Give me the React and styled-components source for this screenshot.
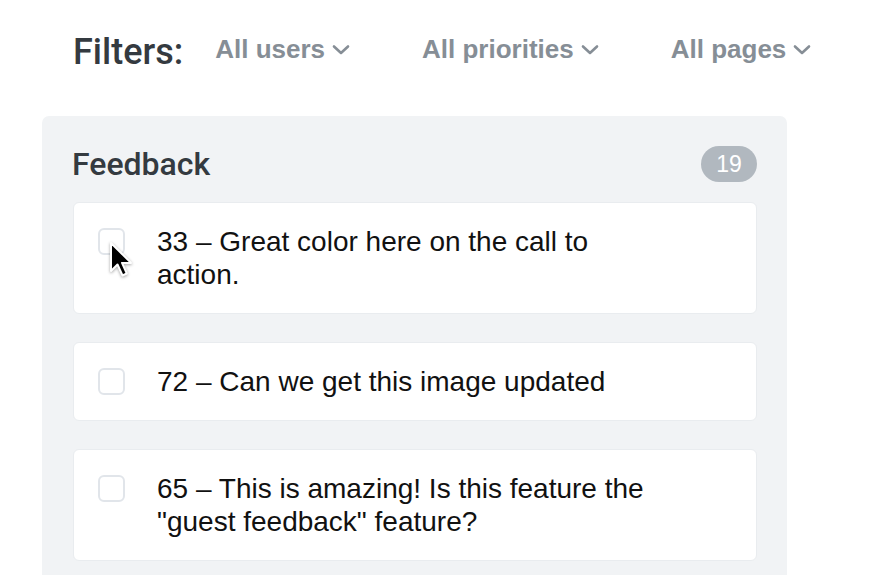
import React from 'react';
import styled, { createGlobalStyle } from 'styled-components';

const GlobalStyle = createGlobalStyle`
  html, body {
    margin: 0;
    padding: 0;
    background: #fff;
  }
  body {
    font-family: 'Liberation Sans', Arial, sans-serif;
    overflow: hidden;
  }
`;

const Page = styled.div`
  width: 884px;
  height: 575px;
  padding-left: 42px;
  box-sizing: border-box;
  overflow: hidden;
`;

const FilterBar = styled.div`
  height: 98px;
  margin-bottom: 18px;
  padding-left: 31px;
  display: flex;
  align-items: center;
`;

const FilterLabel = styled.div`
  font-family: Roboto, 'Liberation Sans', sans-serif;
  font-weight: 500;
  font-size: 36px;
  color: #343a40;
  margin-right: 32px;
  padding-top: 5px;
`;

const Dropdown = styled.div`
  display: flex;
  align-items: center;
  gap: 7px;
  font-size: 26px;
  font-weight: 700;
  color: #868e96;
  margin-right: 72px;
  cursor: pointer;
`;

const Panel = styled.section`
  width: 745px;
  height: 500px;
  background: #f1f3f5;
  border-radius: 7px;
  padding: 30px 30px 0 31px;
  box-sizing: border-box;
`;

const PanelHeader = styled.div`
  height: 36px;
  display: flex;
  align-items: center;
  justify-content: space-between;
  margin-bottom: 20px;
  margin-left: -1px;
`;

const PanelTitle = styled.h2`
  margin: 0;
  font-family: Roboto, 'Liberation Sans', sans-serif;
  font-weight: 500;
  font-size: 32px;
  color: #343a40;
`;

const Badge = styled.span`
  width: 56px;
  height: 36px;
  border-radius: 18px;
  background: #b1b8bf;
  color: #fff;
  font-size: 23px;
  display: flex;
  align-items: center;
  justify-content: center;
`;

const CardList = styled.div`
  display: flex;
  flex-direction: column;
  gap: 28px;
`;

const Card = styled.div`
  position: relative;
  background: #fff;
  border: 1px solid #e9ecef;
  border-radius: 6px;
  padding: 22px 80px 22px 24px;
  display: flex;
  align-items: flex-start;
  gap: 32px;
`;

const Check = styled.span`
  flex: none;
  width: 23px;
  height: 23px;
  margin-top: 3px;
  border: 2px solid #e1e5ea;
  border-radius: 6px;
  background: #fff;
`;

const CardText = styled.div`
  font-size: 28px;
  line-height: 33px;
  color: #111;
`;

const Cursor = styled.svg`
  position: absolute;
  left: 35px;
  top: 38px;
  filter: drop-shadow(0 1px 1.5px rgba(0, 0, 0, 0.35));
`;

const Chevron = () => (
  <svg width="18" height="11" viewBox="0 0 18 11">
    <path d="M2 2.5l7 6.5 7-6.5" fill="none" stroke="#868e96" strokeWidth="2.6" strokeLinecap="round" strokeLinejoin="round" />
  </svg>
);

const filters = ['All users', 'All priorities', 'All pages'];

const items = [
  { id: 33, text: 'Great color here on the call to action.', cursor: true },
  { id: 72, text: 'Can we get this image updated' },
  { id: 65, text: 'This is amazing! Is this feature the "guest feedback" feature?' },
];

export default function App() {
  return (
    <Page>
      <GlobalStyle />
      <FilterBar>
        <FilterLabel>Filters:</FilterLabel>
        {filters.map(f => (
          <Dropdown key={f}>
            {f}
            <Chevron />
          </Dropdown>
        ))}
      </FilterBar>
      <Panel>
        <PanelHeader>
          <PanelTitle>Feedback</PanelTitle>
          <Badge>19</Badge>
        </PanelHeader>
        <CardList>
          {items.map(item => (
            <Card key={item.id}>
              <Check />
              <CardText>
                {item.id} – {item.text}
              </CardText>
              {item.cursor && (
                <Cursor width="24" height="36" viewBox="0 0 24 36">
                  <path
                    d="M2 2v28l6.5-6.5 5 11 4.3-2-4.8-10.6H22z"
                    fill="#000"
                    stroke="#fff"
                    strokeWidth="2"
                    strokeLinejoin="round"
                  />
                </Cursor>
              )}
            </Card>
          ))}
        </CardList>
      </Panel>
    </Page>
  );
}
